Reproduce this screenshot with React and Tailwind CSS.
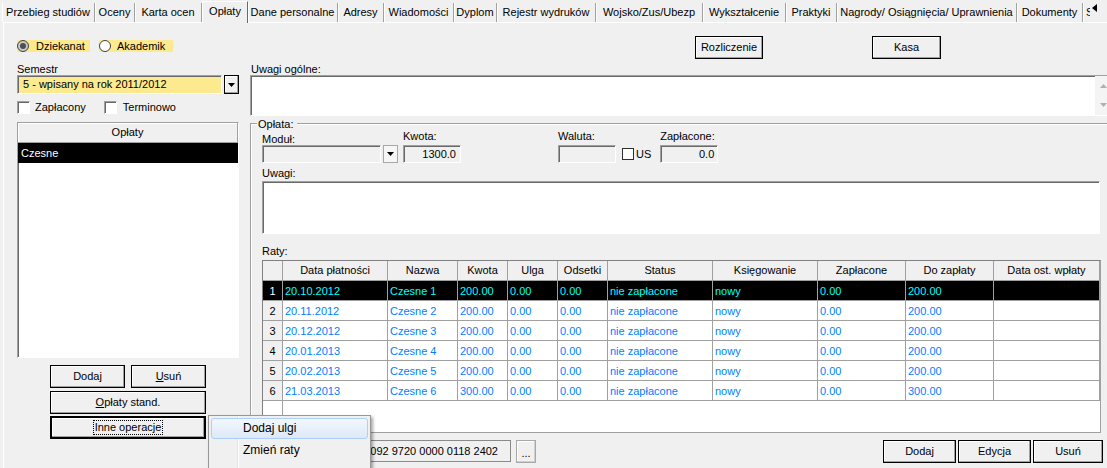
import React from "react";

const RAISED =
  "border border-black shadow-[inset_-1px_-1px_#a0a0a0,inset_1px_1px_#ffffff] bg-[#f0f0f0]";
const SUNKEN =
  "border border-t-[#a0a0a0] border-l-[#a0a0a0] border-r-white border-b-white shadow-[inset_1px_1px_#696969]";

const TABS = [
  { t: "Przebieg studiów", w: "w-[93px]" },
  { t: "Oceny", w: "w-[40px]" },
  { t: "Karta ocen", w: "w-[67px]" },
  { t: "Opłaty", w: "w-[46px]", active: true },
  { t: "Dane personalne", w: "w-[90px]" },
  { t: "Adresy", w: "w-[46px]" },
  { t: "Wiadomości", w: "w-[70px]" },
  { t: "Dyplom", w: "w-[43px]" },
  { t: "Rejestr wydruków", w: "w-[99px]" },
  { t: "Wojsko/Zus/Ubezp", w: "w-[107px]" },
  { t: "Wykształcenie", w: "w-[83px]" },
  { t: "Praktyki", w: "w-[51px]" },
  { t: "Nagrody/ Osiągnięcia/ Uprawnienia", w: "w-[180px]" },
  { t: "Dokumenty", w: "w-[66px]" },
];

const ROWS = [
  ["1", "20.10.2012", "Czesne 1", "200.00", "0.00", "0.00", "nie zapłacone", "nowy", "0.00", "200.00", ""],
  ["2", "20.11.2012", "Czesne 2", "200.00", "0.00", "0.00", "nie zapłacone", "nowy", "0.00", "200.00", ""],
  ["3", "20.12.2012", "Czesne 3", "200.00", "0.00", "0.00", "nie zapłacone", "nowy", "0.00", "200.00", ""],
  ["4", "20.01.2013", "Czesne 4", "200.00", "0.00", "0.00", "nie zapłacone", "nowy", "0.00", "200.00", ""],
  ["5", "20.02.2013", "Czesne 5", "200.00", "0.00", "0.00", "nie zapłacone", "nowy", "0.00", "200.00", ""],
  ["6", "21.03.2013", "Czesne 6", "300.00", "0.00", "0.00", "nie zapłacone", "nowy", "0.00", "300.00", ""],
];

const HEAD = ["", "Data płatności", "Nazwa", "Kwota", "Ulga", "Odsetki", "Status", "Księgowanie", "Zapłacone", "Do zapłaty", "Data ost. wpłaty"];

const COLS = "grid grid-cols-[20px_105px_70px_50px_50px_50px_105px_105px_88px_88px_106px]";

function DownArrow() {
  return (
    <svg width="7" height="4" viewBox="0 0 7 4">
      <path d="M0 0h7L3.5 4z" fill="#000" />
    </svg>
  );
}

function Tabs() {
  return (
    <div className="flex h-[22px] items-end pl-[2px]">
      {TABS.map((tab) =>
        tab.active ? (
          <div
            key={tab.t}
            className={`${tab.w} relative z-10 mb-[-1px] h-[22px] shrink-0 border-t border-l border-white border-r border-r-[#696969] bg-[#f0f0f0] pt-[3px] text-center whitespace-nowrap`}
          >
            {tab.t}
          </div>
        ) : (
          <div
            key={tab.t}
            className={`${tab.w} flex h-[19px] shrink-0 items-center justify-center border-r border-r-[#a0a0a0] shadow-[inset_1px_0_#ffffff] whitespace-nowrap`}
          >
            {tab.t}
          </div>
        )
      )}
      <div className="flex h-[19px] w-[7px] shrink-0 items-center overflow-hidden pl-[3px] shadow-[inset_1px_0_#ffffff]">
        S
      </div>
      <div className="mb-[4px] flex h-[16px] w-[17px] shrink-0 items-start justify-start self-end pl-[2px] pt-[2px]">
        <svg width="5" height="8" viewBox="0 0 5 8">
          <path d="M5 0v8L0 4z" fill="#000" />
        </svg>
      </div>
    </div>
  );
}

function Radio({ checked }) {
  return (
    <svg width="12" height="12" viewBox="0 0 12 12" className="shrink-0">
      <circle cx="6" cy="6" r="5.5" fill={checked ? "#c8c8c8" : "#ffffff"} stroke="#404040" />
      {checked && <circle cx="6" cy="6" r="3" fill="#505050" />}
    </svg>
  );
}

function CheckBox() {
  return <div className={`h-[13px] w-[13px] shrink-0 bg-white ${SUNKEN}`} />;
}

function LeftPanel() {
  return (
    <div className="w-[246px] shrink-0 pl-[13px] pt-[17px]">
      <div className="flex h-[12px] items-center">
        <div className="flex h-[12px] w-[73px] items-center bg-[#fde98e]">
          <Radio checked />
          <span className="ml-[7px] leading-[12px]">Dziekanat</span>
        </div>
        <div className="ml-[9px] flex h-[12px] w-[74px] items-center bg-[#fde98e]">
          <Radio />
          <span className="ml-[6px] leading-[12px]">Akademik</span>
        </div>
      </div>
      <div className="mt-[11px] h-[12px] leading-[13px]">Semestr</div>
      <div className="flex h-[19px]">
        <div className={`flex h-[19px] w-[205px] items-center bg-[#fde98e] pl-[5px] ${SUNKEN}`}>
          5 - wpisany na rok 2011/2012
        </div>
        <div className={`ml-[2px] flex h-[19px] w-[15px] items-center justify-center ${RAISED} border-[#a0a0a0]`}>
          <DownArrow />
        </div>
      </div>
      <div className="mt-[7px] flex h-[13px] items-center">
        <CheckBox />
        <span className="ml-[5px]">Zapłacony</span>
        <div className="ml-[18px]">
          <CheckBox />
        </div>
        <span className="ml-[6px]">Terminowo</span>
      </div>
      <div className={`mt-[8px] h-[236px] w-[222px] bg-white ${SUNKEN} flex flex-col`}>
        <div className="flex h-[20px] shrink-0 items-center justify-center border-r border-b border-[#a0a0a0] bg-[#f0f0f0] shadow-[inset_1px_1px_#ffffff]">
          Opłaty
        </div>
        <div className="flex h-[20px] shrink-0 items-center bg-black pl-[3px] text-white">Czesne</div>
      </div>
      <div className="ml-[33px] mt-[7px] flex">
        <div className={`flex h-[23px] w-[75px] items-center justify-center ${RAISED}`}>Dodaj</div>
        <div className={`ml-[6px] flex h-[23px] w-[75px] items-center justify-center ${RAISED}`}>
          <span>
            <span className="underline">U</span>suń
          </span>
        </div>
      </div>
      <div className={`ml-[33px] mt-[3px] flex h-[23px] w-[156px] items-center justify-center ${RAISED}`}>
        <span>
          <span className="underline">O</span>płaty stand.
        </span>
      </div>
      <div className="ml-[33px] mt-[2px] flex h-[23px] w-[156px] items-center justify-center border-2 border-black bg-[#f0f0f0] shadow-[inset_-1px_-1px_#a0a0a0,inset_1px_1px_#ffffff]">
        <span className="border border-dotted border-black px-[1px] leading-[13px]">Inne operacje</span>
      </div>
    </div>
  );
}

function Grid() {
  return (
    <div className="flex h-[173px] w-[839px] flex-col overflow-hidden border border-t-[#808080] border-l-[#808080] border-r-[#a0a0a0] border-b-[#a0a0a0] bg-white">
      <div className={COLS}>
        {HEAD.map((h, i) => (
          <div
            key={i}
            className="flex h-[20px] items-center justify-center overflow-hidden whitespace-nowrap border-r border-b border-[#a0a0a0] bg-[#f0f0f0]"
          >
            {h}
          </div>
        ))}
      </div>
      {ROWS.map((r, ri) => {
        const sel = ri === 0;
        return (
          <div key={ri} className={COLS}>
            {r.map((c, ci) =>
              ci === 0 ? (
                <div
                  key={ci}
                  className={`h-[20px] border-r border-b border-[#a0a0a0] text-center leading-[20px] ${
                    sel ? "bg-black text-white" : "bg-[#f0f0f0] text-black"
                  }`}
                >
                  {c}
                </div>
              ) : (
                <div
                  key={ci}
                  className={`h-[20px] overflow-hidden whitespace-nowrap border-r border-b border-[#a0a0a0] pl-[2px] leading-[20px] ${
                    sel ? "bg-black text-[#00ffff]" : "bg-white text-[#0080ff]"
                  }`}
                >
                  {c}
                </div>
              )
            )}
          </div>
        );
      })}
      <div className="flex-1">
        <div className="h-full w-[20px] border-r border-[#a0a0a0]" />
      </div>
    </div>
  );
}

function RightPanel() {
  return (
    <div className="w-[857px] shrink-0 pt-[13px]">
      <div className="flex h-[23px]">
        <div className={`ml-[445px] flex h-[23px] w-[68px] items-center justify-center ${RAISED}`}>Rozliczenie</div>
        <div className={`ml-[109px] flex h-[23px] w-[69px] items-center justify-center ${RAISED}`}>Kasa</div>
      </div>
      <div className="ml-[1px] mt-[4px] h-[12px] leading-[13px]">Uwagi ogólne:</div>
      <div className={`flex h-[41px] w-[863px] bg-white ${SUNKEN}`}>
        <div className="flex-1" />
        <div className="flex w-[17px] flex-col items-center justify-between bg-[#f4f4f4] py-[8px]">
          <svg width="7" height="4" viewBox="0 0 7 4">
            <path d="M0 4h7L3.5 0z" fill="#b0b0b0" />
          </svg>
          <svg width="7" height="4" viewBox="0 0 7 4">
            <path d="M0 0h7L3.5 4z" fill="#b0b0b0" />
          </svg>
        </div>
      </div>
      <div className="relative mt-[7px] h-[346px] w-[870px] border-t border-l border-[#a0a0a0] shadow-[inset_1px_1px_#ffffff]">
        <div className="absolute left-[6px] top-[-6px] bg-[#f0f0f0] pl-[1px] pr-[4px] leading-[13px]">Opłata:</div>
        <div className="pl-[11px] pt-[6px]">
          <div className="flex h-[33px] items-end">
            <div className="flex flex-col">
              <div className="h-[12px] leading-[13px]">Moduł:</div>
              <div className="flex">
                <div className={`h-[18px] w-[119px] bg-[#f0f0f0] ${SUNKEN}`} />
                <div className="ml-[2px] flex h-[18px] w-[15px] items-center justify-center border border-[#a8a8a8] bg-[#f6f6f6]">
                  <DownArrow />
                </div>
              </div>
            </div>
            <div className="ml-[5px] flex flex-col">
              <div className="mb-[3px] h-[12px] leading-[13px]">Kwota:</div>
              <div className={`flex h-[18px] w-[58px] items-center justify-end bg-[#f0f0f0] pr-[4px] ${SUNKEN}`}>1300.0</div>
            </div>
            <div className="ml-[97px] flex flex-col">
              <div className="mb-[3px] h-[12px] leading-[13px]">Waluta:</div>
              <div className={`h-[18px] w-[58px] bg-[#f0f0f0] ${SUNKEN}`} />
            </div>
            <div className="ml-[6px] flex h-[18px] items-center">
              <div className="h-[12px] w-[12px] border border-[#303030] bg-white" />
              <span className="ml-[2px]">US</span>
            </div>
            <div className="ml-[9px] flex flex-col">
              <div className="mb-[3px] h-[12px] leading-[13px]">Zapłacone:</div>
              <div className={`flex h-[18px] w-[58px] items-center justify-end bg-[#f0f0f0] pr-[3px] ${SUNKEN}`}>0.0</div>
            </div>
          </div>
          <div className="mt-[4px] h-[12px] leading-[13px]">Uwagi:</div>
          <div className={`mt-[2px] h-[53px] w-[838px] bg-white ${SUNKEN}`} />
          <div className="mt-[11px] h-[12px] leading-[13px]">Raty:</div>
          <div className="mt-[3px]">
            <Grid />
          </div>
          <div className="mt-[7px] flex h-[23px] items-start">
            <div className="flex h-[22px] w-[249px] items-center justify-end border border-[#8a8a8a] bg-[#f0f0f0] pr-[12px] whitespace-nowrap">
              092 9720 0000 0118 2402
            </div>
            <div className="ml-[5px] flex h-[23px] w-[20px] items-end justify-center border border-[#a8a8a8] bg-[#f0f0f0] pb-[4px] shadow-[inset_-1px_-1px_#d0d0d0,inset_1px_1px_#ffffff] leading-[10px]">
              ...
            </div>
            <div className={`ml-[347px] flex h-[23px] w-[73px] items-center justify-center ${RAISED}`}>Dodaj</div>
            <div className={`ml-[2px] flex h-[23px] w-[73px] items-center justify-center ${RAISED}`}>Edycja</div>
            <div className={`ml-[2px] flex h-[23px] w-[70px] items-center justify-center ${RAISED}`}>Usuń</div>
          </div>
        </div>
      </div>
    </div>
  );
}

function Menu() {
  return (
    <div className="absolute left-[208px] top-[415px] h-[62px] w-[163px] border border-[#979797] bg-[#f0f0f0] shadow-[2px_2px_3px_rgba(0,0,0,0.35)]">
      <div className="absolute left-[28px] top-0 h-full w-px bg-[#e2e3e3]" />
      <div className="absolute left-[29px] top-0 h-full w-px bg-white" />
      <div className="relative mx-[2px] mt-[2px] flex h-[21px] items-center rounded-[3px] border border-[#aecff7] bg-gradient-to-b from-[#f2f7fd] to-[#dde9f8] pl-[31px] text-[12px]">
        Dodaj ulgi
      </div>
      <div className="relative mx-[2px] mt-[1px] flex h-[21px] items-center pl-[32px] text-[12px]">Zmień raty</div>
    </div>
  );
}

export default function App() {
  return (
    <div className="relative h-[468px] w-[1107px] overflow-hidden bg-[#f0f0f0] font-['Liberation_Sans',Arial,sans-serif] text-[11px] leading-[13px] text-black">
      <Tabs />
      <div className="ml-[3px] flex h-[446px] border-t border-l border-white">
        <LeftPanel />
        <RightPanel />
      </div>
      <Menu />
    </div>
  );
}
